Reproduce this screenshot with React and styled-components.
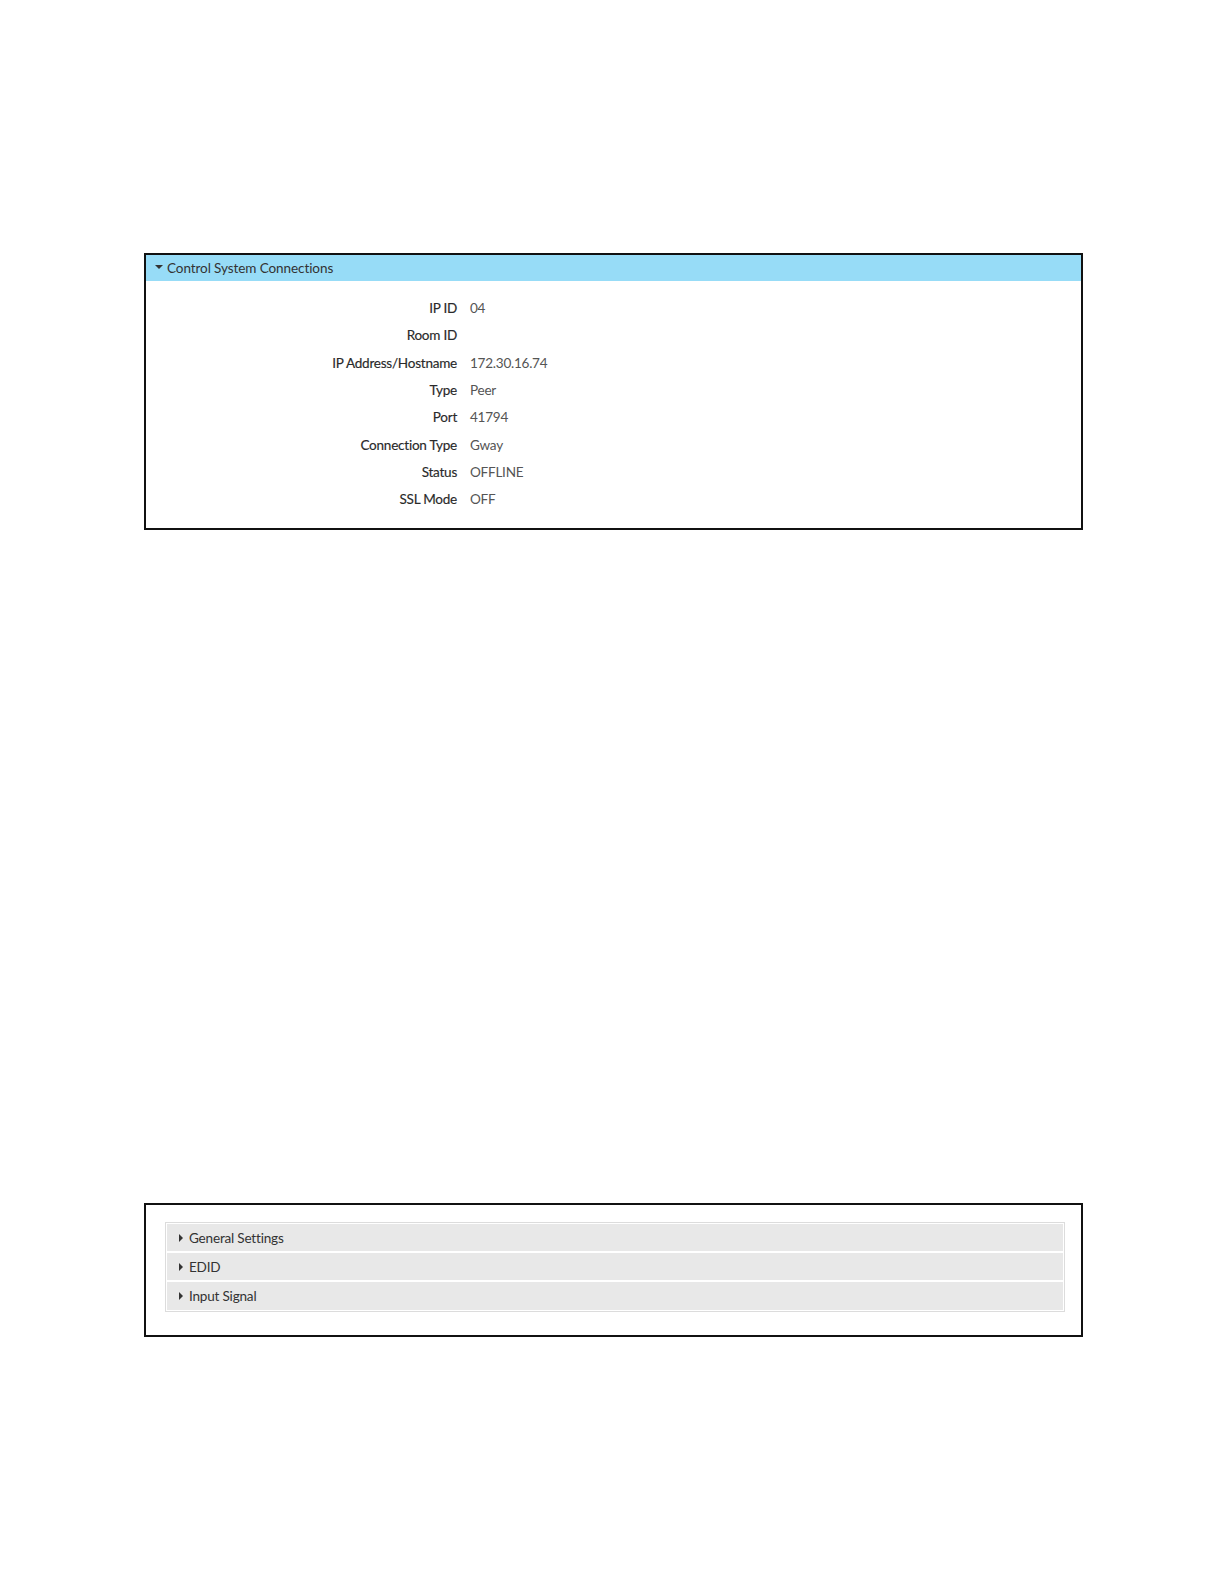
import React from 'react'
import styled, { createGlobalStyle } from 'styled-components'

const GlobalStyle = createGlobalStyle`
  html, body {
    margin: 0;
    background: #ffffff;
    font-family: Lato, "Open Sans", sans-serif;
  }
`

const fields = [
  ['IP ID', '04'],
  ['Room ID', ''],
  ['IP Address/Hostname', '172.30.16.74'],
  ['Type', 'Peer'],
  ['Port', '41794'],
  ['Connection Type', 'Gway'],
  ['Status', 'OFFLINE'],
  ['SSL Mode', 'OFF'],
]

const sections = ['General Settings', 'EDID', 'Input Signal']

const App = () => {
  return (
    <>
      <GlobalStyle />
      <Page>
        <Panel top={253}>
          <Header>
            <DownCaret />
            <span>Control System Connections</span>
          </Header>
          <FieldGrid>
            {fields.map(([label, value]) => (
              <React.Fragment key={label}>
                <Label>{label}</Label>
                <Value>{value}</Value>
              </React.Fragment>
            ))}
          </FieldGrid>
        </Panel>
        <Panel top={673}>
          <Accordion>
            {sections.map((name) => (
              <AccordionRow key={name}>
                <SideCaret />
                <span>{name}</span>
              </AccordionRow>
            ))}
          </Accordion>
        </Panel>
      </Page>
    </>
  )
}

const Page = styled.div`
  display: flow-root;
  padding-left: 144px;
  height: 1500px;
  box-sizing: border-box;
`

const Panel = styled.div`
  margin-top: ${props => props.top}px;
  width: 939px;
  box-sizing: border-box;
  border: 2px solid #111;
`

const Header = styled.div`
  height: 25.5px;
  background: #97dcf7;
  display: flex;
  align-items: center;
  padding-left: 9px;
  font-size: 13.55px;
  color: #333;
  letter-spacing: -0.1px;
`

const DownCaret = styled.span`
  width: 0;
  height: 0;
  border-left: 4px solid transparent;
  border-right: 4px solid transparent;
  border-top: 4px solid #333;
  margin-right: 4px;
  transform: translateY(-1px);
`

const FieldGrid = styled.div`
  display: grid;
  grid-template-columns: 311px 1fr;
  column-gap: 13px;
  grid-auto-rows: 27.3px;
  align-items: center;
  padding: 14px 0 15px;
  font-size: 13.55px;
  letter-spacing: -0.25px;
`

const Label = styled.div`
  text-align: right;
  color: #2a2a2a;
  -webkit-text-stroke: 0.15px #2a2a2a;
`

const Value = styled.div`
  color: #555;
`

const Accordion = styled.div`
  margin: 17px 16px 23px 19px;
  border: 1px solid #dcdcdc;
  padding: 1px;
  display: flex;
  flex-direction: column;
  gap: 2px;
`

const AccordionRow = styled.div`
  height: 27.3px;
  background: #e8e8e8;
  display: flex;
  align-items: center;
  padding-left: 12px;
  font-size: 13.55px;
  color: #333;
  letter-spacing: -0.2px;
`

const SideCaret = styled.span`
  width: 0;
  height: 0;
  border-top: 4px solid transparent;
  border-bottom: 4px solid transparent;
  border-left: 4px solid #333;
  margin-right: 6px;
`

export default App
